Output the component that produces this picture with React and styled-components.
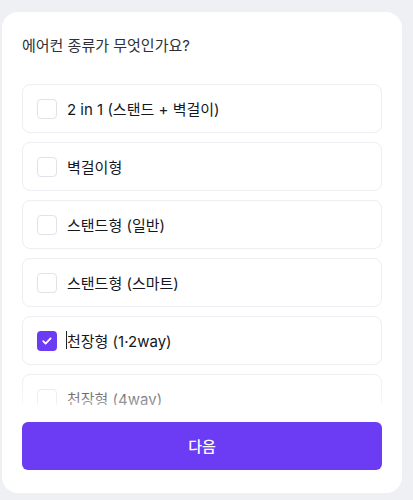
import React, { useState } from 'react';
import styled, { createGlobalStyle } from 'styled-components';

const GlobalStyle = createGlobalStyle`
  html, body {
    margin: 0;
    padding: 0;
    background: #eff0f4;
    font-family: Inter, "Noto Sans CJK KR", sans-serif;
  }
`;

const Page = styled.div`
  padding: 12px 11px 7px 2px;
`;

const Card = styled.div`
  width: 400px;
  height: 481px;
  box-sizing: border-box;
  background: #fff;
  border-radius: 16px;
  padding: 24px 20px 23px;
  display: flex;
  flex-direction: column;
`;

const Title = styled.div`
  font-size: 15px;
  line-height: 20px;
  color: #2e3138;
  font-weight: 400;
`;

const ListWrap = styled.div`
  position: relative;
  margin-top: 28px;
  flex: 1;
  overflow: hidden;
`;

const List = styled.div`
  display: flex;
  flex-direction: column;
  gap: 9px;
`;

const Fade = styled.div`
  position: absolute;
  left: 0;
  right: 0;
  bottom: 0;
  height: 30px;
  background: linear-gradient(rgba(255, 255, 255, 0), rgba(255, 255, 255, 0.6));
  pointer-events: none;
`;

const Option = styled.label`
  height: 49px;
  box-sizing: border-box;
  border: 1px solid #eceef2;
  border-radius: 8px;
  display: flex;
  align-items: center;
  padding-left: 14px;
  gap: 10px;
  cursor: pointer;
  flex-shrink: 0;
`;

const Box = styled.span`
  width: 20px;
  height: 20px;
  box-sizing: border-box;
  border-radius: 4px;
  border: ${p => (p.checked ? 'none' : '1.5px solid #dfe3e8')};
  background: ${p => (p.checked ? '#6c3cf4' : '#fff')};
  display: flex;
  align-items: center;
  justify-content: center;
`;

const Label = styled.span`
  font-size: 15px;
  color: #15171c;
  font-weight: 400;
  position: relative;
`;

const Caret = styled.span`
  position: absolute;
  left: -1px;
  top: 1px;
  width: 1px;
  height: 18px;
  background: #222;
`;

const NextButton = styled.button`
  margin-top: 17px;
  height: 48px;
  border: none;
  border-radius: 6px;
  background: #6c3cf4;
  color: #fff;
  font-family: inherit;
  font-size: 15px;
  font-weight: 500;
  padding: 0 0 2px;
  flex-shrink: 0;
`;

const options = [
  '2 in 1 (스탠드 + 벽걸이)',
  '벽걸이형',
  '스탠드형 (일반)',
  '스탠드형 (스마트)',
  '천장형 (1·2way)',
  '천장형 (4way)',
];

const Check = () => (
  <svg width="12" height="12" viewBox="0 0 12 12" fill="none">
    <path d="M2.2 6.2l2.4 2.4 5-5.2" stroke="#fff" strokeWidth="1.8" strokeLinecap="round" strokeLinejoin="round" />
  </svg>
);

export default function App() {
  const [selected, setSelected] = useState(4);
  return (
    <Page>
      <GlobalStyle />
      <Card>
        <Title>에어컨 종류가 무엇인가요?</Title>
        <ListWrap>
          <List>
            {options.map((o, i) => (
              <Option key={o} onClick={() => setSelected(i)}>
                <Box checked={selected === i}>{selected === i && <Check />}</Box>
                <Label>
                  {selected === i && <Caret />}
                  {o}
                </Label>
              </Option>
            ))}
          </List>
          <Fade />
        </ListWrap>
        <NextButton>다음</NextButton>
      </Card>
    </Page>
  );
}
